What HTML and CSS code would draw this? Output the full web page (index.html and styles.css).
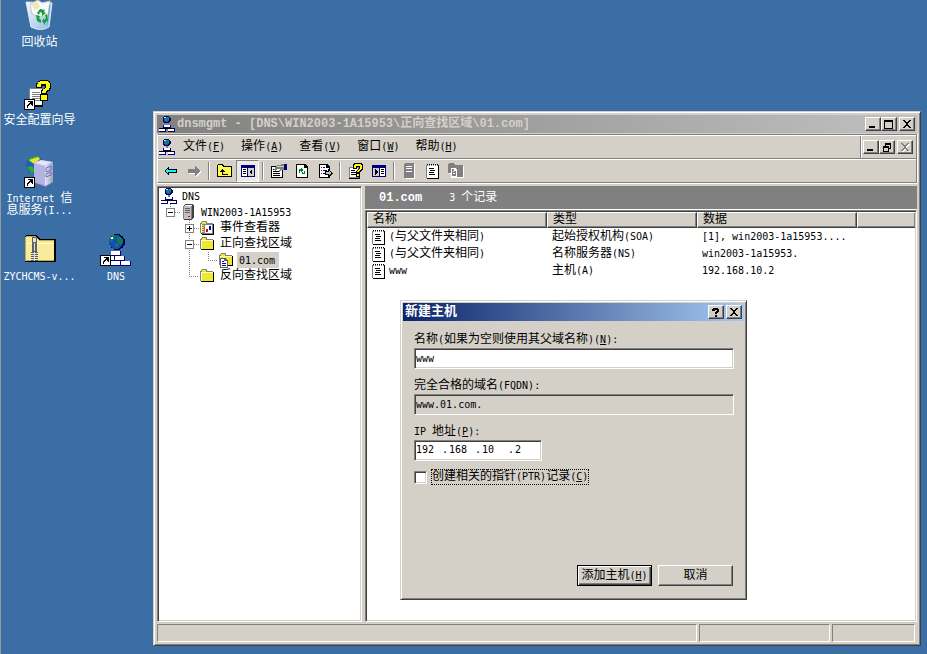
FILE: index.html
```html
<!DOCTYPE html>
<html lang="zh-CN">
<head>
    <meta charset="UTF-8">
    <meta name="viewport" content="width=device-width, initial-scale=1.0">
    <title>dnsmgmt</title>
    <link rel="stylesheet" href="styles.css">
</head>
<body>
    <!-- icon sprite -->
    <svg class="sprite" aria-hidden="true">
        <defs>
            <linearGradient id="glass" x1="0" y1="0" x2="1" y2="1">
                <stop offset="0" stop-color="#f4fafd"/>
                <stop offset="1" stop-color="#8ebbe2"/>
            </linearGradient>
            <linearGradient id="tower" x1="0" y1="0" x2="1" y2="0">
                <stop offset="0" stop-color="#e4e4fa"/>
                <stop offset="1" stop-color="#9c9cd0"/>
            </linearGradient>
        </defs>
        <symbol id="dns" viewBox="0 0 16 16">
            <path d="M5 0h5v1h1v1h1v3h-1v1h-1v1H5V6H4V1h1z" fill="#000060"/>
            <path d="M5 1h4v1h1v3H9v1H6V5H5z" fill="#2050d0"/>
            <path d="M6 3h2v2H6zM8 1h2v3H9V3H8z" fill="#00a040"/>
            <path d="M5 1h2v1H5z" fill="#c0ffff"/>
            <path d="M7 7h2v2H7z" fill="#808080"/>
            <path d="M4 9h8v3H4zM0 12h7v4H0zM9 12h7v4H9z" fill="#000080"/>
            <path d="M1 12h14v1H1z" fill="#000"/>
            <path d="M5 9h6v2H5zM0 13h6v2H0zM9 13h6v2H9z" fill="#fff"/>
        </symbol>
        <symbol id="server" viewBox="0 0 16 16">
            <path d="M5 0h7l2 1v13l-3 2H4V1z" fill="#404040"/>
            <path d="M4 2h7v13H4z" fill="#c0c0c0"/>
            <path d="M5 1h7v1H5z" fill="#fff"/>
            <path d="M11 2h1v13h-1z" fill="#808080"/>
            <path d="M5 4h5v1H5zM5 6h5v1H5zM5 8h5v1H5z" fill="#606060"/>
            <path d="M8 12h2v1H8z" fill="#e00000"/>
            <path d="M3 2h1v13H3z" fill="#808080"/>
        </symbol>
        <symbol id="folder" viewBox="0 0 16 16">
            <path d="M3 1h4l1 1v1h6v10H1V3h1V2h1z" fill="#808080"/>
            <path d="M2 4h12v9H2zM3 2h4v2H3z" fill="#f0e830"/>
            <path d="M2 4h12v1H2zM2 5h1v8H2z" fill="#ffffc0"/>
            <path d="M14 4h1v10H2v-1h12z" fill="#000"/>
        </symbol>
        <symbol id="events" viewBox="0 0 16 16">
            <use href="#folder"/>
            <path d="M3 4h12v11H3z" fill="#000"/>
            <path d="M3 4h11v10H3z" fill="#808080"/>
            <path d="M6 5h7v8H6z" fill="#fff"/>
            <path d="M3 5h2v1H3zM3 7h2v1H3zM3 9h2v1H3zM3 11h2v1H3z" fill="#ffe800"/>
            <path d="M7 9h2v3H7z" fill="#e00000"/>
            <path d="M10 6h2v4h-2z" fill="#0000c0"/>
        </symbol>
        <symbol id="zone" viewBox="0 0 16 16">
            <use href="#folder"/>
            <path d="M2 6h5l3 3v7H2z" fill="#606060"/>
            <path d="M3 7h3v2h3v6H3z" fill="#fff"/>
            <path d="M4 9h2v1H4zM4 11h4v1H4zM4 13h4v1H4z" fill="#0000c0"/>
        </symbol>
        <symbol id="record" viewBox="0 0 14 16">
            <path d="M1 1h1v1H1zM3 1h1v1H3zM5 1h1v1H5zM7 1h1v1H7zM9 1h1v1H9zM11 1h1v1h-1z" fill="#000"/>
            <path d="M0 2h12v13H0z" fill="#808080"/>
            <path d="M12 2h1v14H1v-1h11z" fill="#000"/>
            <path d="M1 3h11v12H1z" fill="#fff"/>
            <path d="M2 2h1v1H2zM4 2h1v1H4zM6 2h1v1H6zM8 2h1v1H8zM10 2h1v1h-1z" fill="#fff"/>
            <path d="M3 5h5v1H3zM4 7h5v1H4zM3 9h5v1H3zM3 11h6v1H3z" fill="#000"/>
        </symbol>
        <!-- tree guides, one 19px cell each -->
        <symbol id="tee-minus" viewBox="0 0 19 16">
            <path d="M9.500 0v16M14 8.500h5" class="dots"/>
            <path d="M5.500 4.500h8v8h-8z" fill="#fff" stroke="#808080"/>
            <path d="M7 8.500h5" stroke="#000"/>
        </symbol>
        <symbol id="end-minus" viewBox="0 0 19 16">
            <path d="M9.500 0v4M14 8.500h5" class="dots"/>
            <path d="M5.500 4.500h8v8h-8z" fill="#fff" stroke="#808080"/>
            <path d="M7 8.500h5" stroke="#000"/>
        </symbol>
        <symbol id="tee-plus" viewBox="0 0 19 16">
            <path d="M9.500 0v16M14 8.500h5" class="dots"/>
            <path d="M5.500 4.500h8v8h-8z" fill="#fff" stroke="#808080"/>
            <path d="M7 8.500h5M9.500 6v5" stroke="#000"/>
        </symbol>
        <symbol id="line" viewBox="0 0 19 16"><path d="M9.500 0v16" class="dots"/></symbol>
        <symbol id="elbow" viewBox="0 0 19 16"><path d="M9.500 0v8.500H19" class="dots"/></symbol>
        <symbol id="close" viewBox="0 0 10 8">
            <path d="M1 0h2v1h1v1h2V1h1V0h2v1H8v1H7v1H6v2h1v1h1v1h1v1H7V7H6V6H4v1H3v1H1V7h1V6h1V5h1V3H3V2H2V1H1z"/>
        </symbol>
        <symbol id="shortcut" viewBox="0 0 11 11">
            <path d="M0 0h11v11H0z" fill="#000"/>
            <path d="M1 1h9v9H1z" fill="#fff"/>
            <path d="M4 2h5v5H8V6H7V5H6v1H5v1H4v2H3V6h1V5h1V4h1V3H4z" fill="#000"/>
        </symbol>
        <symbol id="question" viewBox="0 0 15 22">
            <path d="M4 0h8v1h2v2h1v6h-1v2h-2v1h-1v2h1v7H4v-7h1v-4h1V9h2V8h1V6H6v2H0V3h2V1h2z" fill="#000"/>
            <path d="M4 1h8v1h1v1h1v5h-1v2h-2v1h-1v2H6v-2h1V9h2V8h1V4H5v3H1V4h1V2h2zM5 15h6v5H5z" fill="#ff0"/>
        </symbol>
    </svg>

    <main class="desktop">
        <section class="shortcuts">
            <a class="shortcut" href="#">
                <svg width="32" height="32" viewBox="0 0 32 32" class="smooth">
                    <path d="M2 2l26 1-3 24q-8 5-18 0z" fill="url(#glass)" stroke="#dcecf6"/>
                    <path d="M6 4l8-4 4 3 8-2-2 14-9 2-7-3z" fill="#fafafa" stroke="#c8c8c8"/>
                    <path d="M7 4l6-3 3 6-5 3z" fill="#f3e6b4"/>
                    <path d="M26 5l-3 20" stroke="#6ca0d0" fill="none"/>
                    <path d="M13 13l3-4 5 1-1 2 2 1-4 3v-3l-2-1-1 3zM12 15l4 1-1 2 2 2v3l-4-2zM23 14l1 6-3 3v2l-3-4 2-3v2l2-2-1-3z" fill="#14a03c"/>
                </svg>
                <span>回收站</span>
            </a>
            <a class="shortcut" href="#">
                <svg width="32" height="32" viewBox="0 0 32 32">
                    <path d="M6 11h13v18H6z" fill="#000"/>
                    <path d="M5 10h13v17H5z" fill="#fff"/>
                    <path d="M5 10h13v1H5zM5 10h1v17H5z" fill="#808080"/>
                    <path d="M8 14h8v1H8zM8 16h8v1H8zM8 18h8v1H8zM8 20h8v1H8zM8 22h8v1H8z" fill="#808080"/>
                    <use href="#question" x="12" y="2" width="15" height="22"/>
                    <use href="#shortcut" x="0" y="21" width="11" height="11"/>
                </svg>
                <span>安全配置向导</span>
            </a>
            <a class="shortcut" href="#">
                <svg width="32" height="32" viewBox="0 0 32 32" class="smooth">
                    <circle cx="11" cy="9" r="9" fill="#1c62b8"/>
                    <path d="M4 3l6-3 6 1-2 4-5 2-3-1zM3 11l5-1 3 4-3 4z" fill="#35a830"/>
                    <path d="M5 4l9-3 2 2-6 5z" fill="#f0e030"/>
                    <path d="M10 7l7-3 12 2v20l-7 5-12-4z" fill="#8080b8"/>
                    <path d="M10 7l11 3v20l-11-4z" fill="#b4b4e0"/>
                    <path d="M10 7l7-3 12 2-8 4z" fill="#e4e4fa"/>
                    <path d="M21 10l8-4v20l-8 4z" fill="url(#tower)"/>
                    <path d="M22 12l5-2v4l-5 2zM22 18l5-2v3l-5 2z" fill="none" stroke="#7070a8"/>
                    <path d="M26 23h2v2h-2z" fill="#70e030"/>
                    <use href="#shortcut" x="0" y="21" width="11" height="11"/>
                </svg>
                <span><span class="en">Internet </span>信<br>息服务<span class="en">(I...</span></span>
            </a>
            <a class="shortcut" href="#">
                <svg width="32" height="32" viewBox="0 0 32 32">
                    <path d="M2 1h11l3 4h15l1 1v22H1V3z" fill="#000"/>
                    <path d="M2 2h10l3 4h15v21H1V3z" fill="#c8a850"/>
                    <path d="M2 3h10l3 4h15v19H2z" fill="#f8eb9c"/>
                    <path d="M3 9h26v1H3z" fill="#fffce0"/>
                    <path d="M8 3h5v15H8z" fill="#606060"/>
                    <path d="M9 4h3v4H9zM10 9h1v8h-1z" fill="#e0e0e0"/>
                    <path d="M8 18h5v9H8z" fill="#e0e0e0"/>
                    <path d="M7 18h3v1H7zM11 20h3v1h-3zM7 22h3v1H7zM11 24h3v1h-3zM7 26h3v1H7zM7 20h3v1H7zM11 18h3v1h-3zM11 22h3v1h-3zM11 26h3v1h-3zM7 24h3v1H7z" fill="#606060"/>
                </svg>
                <span class="en">ZYCHCMS-v...</span>
            </a>
            <a class="shortcut last-row" href="#">
                <svg width="32" height="32" viewBox="0 0 32 32">
                    <circle cx="17" cy="8" r="8" fill="#000050"/>
                    <circle cx="16" cy="8" r="7" fill="#1848c0"/>
                    <path d="M10 4l3-3h3l-1 3-3 4-2-1zM17 3h4l2 3-1 4h-3l-2-3zM15 9l4 1-1 4-3-1z" fill="#108048"/>
                    <path d="M11 3h2v2h-2z" fill="#fff"/>
                    <path d="M11 17h10v5H11zM5 22h10v5H5zM15 22h10v5H15zM11 27h10v5H11zM21 27h10v5H21z" fill="#000080"/>
                    <path d="M11 17h9v4H11zM5 22h9v4H5zM15 22h9v4H15zM11 27h9v4H11zM21 27h9v4H21z" fill="#fff"/>
                    <use href="#shortcut" x="0" y="21" width="11" height="11"/>
                </svg>
                <span class="en">DNS</span>
            </a>
        </section>

        <section class="window">
            <header class="titlebar">
                <svg width="16" height="16"><use href="#dns"/></svg>
                <h1>dnsmgmt - [DNS\WIN2003-1A15953\正向查找区域\01.com]</h1>
                <button class="caption" aria-label="最小化"><svg width="10" height="8"><path d="M1 6h6v2H1z"/></svg></button>
                <button class="caption" aria-label="最大化"><svg width="10" height="9"><path d="M0 0h9v9H0zM1 2v6h7V2z" fill-rule="evenodd"/></svg></button>
                <button class="caption apart" aria-label="关闭"><svg width="10" height="8"><use href="#close"/></svg></button>
            </header>

            <div class="bars">
                <nav class="menubar">
                    <svg width="16" height="16"><use href="#dns"/></svg>
                    <button class="menu">文件<span class="en">(<u>F</u>)</span></button>
                    <button class="menu">操作<span class="en">(<u>A</u>)</span></button>
                    <button class="menu">查看<span class="en">(<u>V</u>)</span></button>
                    <button class="menu">窗口<span class="en">(<u>W</u>)</span></button>
                    <button class="menu">帮助<span class="en">(<u>H</u>)</span></button>
                    <div class="child-buttons">
                        <button class="caption" aria-label="最小化"><svg width="10" height="8"><path d="M1 6h6v2H1z"/></svg></button>
                        <button class="caption" aria-label="还原"><svg width="10" height="9"><path d="M3 0h6v6H7v3H1V3h2zM4 2v1h3v2h1V2zM2 5v3h4V5z" fill-rule="evenodd"/></svg></button>
                        <button class="caption apart" aria-label="关闭" disabled><svg width="10" height="8"><use href="#close"/></svg></button>
                    </div>
                </nav>
                <div class="toolbar">
                    <button class="tool" aria-label="后退"><svg width="16" height="16"><path d="M1 8l5-5v3h8v4H6v3z" fill="#000"/><path d="M2 8l3-3v2h8v2H5v2z" fill="#0ff"/></svg></button>
                    <button class="tool" aria-label="前进"><svg width="16" height="16"><path d="M15 9l-5-5v3H3v4h7v3z" fill="#fff"/><path d="M14 8L9 3v3H2v4h7v3z" fill="#808080"/></svg></button>
                    <i class="sep"></i>
                    <button class="tool" aria-label="向上"><svg width="16" height="16"><path d="M1 1h5l1 2h8v11H0V2z" fill="#000"/><path d="M1 2h4l1 2h8v9H1z" fill="#ffff50"/><path d="M5 6h1v1h1v1h1v1H6v2h5v1H5V9H3V8h1V7h1z" fill="#000"/></svg></button>
                    <button class="tool pressed" aria-label="显示树"><svg width="16" height="16"><path d="M1 2h14v12H1z" fill="#000080"/><path d="M2 5h5v8H2zM8 5h6v8H8z" fill="#fff"/><path d="M8 5h6v8H8z" fill="#d4d0c8"/><path d="M3 6h3v1H3zM3 8h3v1H3zM3 10h3v1H3zM12 6v6L9 9z" fill="#000"/></svg></button>
                    <i class="sep"></i>
                    <button class="tool" aria-label="属性"><svg width="18" height="16"><path d="M1 3h12v12H1z" fill="#000"/><path d="M2 4h10v10H2z" fill="#fff"/><path d="M3 8h6v1H3zM3 10h7v1H3zM3 12h7v1H3zM3 6h2v1H3z" fill="#000"/><path d="M7 2h3l1-1h4v6h-3L9 9 8 8l2-2H7l-2 2-1-1z" fill="#808080"/><path d="M7 3h7v1H7z" fill="#d4d0c8"/><path d="M14 1h3v6h-3z" fill="#000080"/></svg></button>
                    <button class="tool" aria-label="刷新"><svg width="16" height="16"><path d="M2 1h9l3 3v11H2z" fill="#000"/><path d="M3 2h7v3h3v9H3z" fill="#fff"/><path d="M5 6h2V5l2 2-2 2V8H6v2H5zM10 8h1v3H9v1l-2-2 2-2v2h1z" fill="#008020"/></svg></button>
                    <button class="tool" aria-label="导出列表"><svg width="16" height="16"><path d="M2 1h8l3 3v11H2z" fill="#000"/><path d="M3 2h6v3h3v9H3z" fill="#fff"/><path d="M4 4h1v1H4zM4 7h1v1H4zM4 10h1v1H4z" fill="#c00000"/><path d="M6 4h2v1H6zM6 7h4v1H6zM6 10h2v1H6z" fill="#000080"/><path d="M8 8h3V6l5 4-5 5v-3H8z" fill="#000"/><path d="M9 9h3V8l2 2-2 2v-1H9z" fill="#c0c0c0"/></svg></button>
                    <i class="sep"></i>
                    <button class="tool" aria-label="帮助"><svg width="16" height="16"><path d="M1 4h11v12H1z" fill="#000"/><path d="M1 4h10v11H1z" fill="#808080"/><path d="M2 5h8v9H2z" fill="#fff"/><path d="M3 7h4v1H3zM3 9h5v1H3zM3 11h5v1H3z" fill="#000"/><path d="M6 0h7l2 2v4l-3 3v5H8V8l3-3V4H9v2H5V2z" fill="#000"/><path d="M7 1h5l2 2v2l-3 3v1H9V8l3-3V3H8v2H6V2zM9 11h2v2H9z" fill="#ff0"/></svg></button>
                    <button class="tool" aria-label="显示操作窗格"><svg width="16" height="16"><path d="M1 2h14v12H1z" fill="#000080"/><path d="M2 5h6v8H2z" fill="#d4d0c8"/><path d="M9 5h5v8H9z" fill="#fff"/><path d="M10 6h3v1h-3zM10 8h3v1h-3zM10 10h3v1h-3zM4 6v6l3-3z" fill="#000"/></svg></button>
                    <i class="sep"></i>
                    <button class="tool" aria-label="新建服务器"><svg width="16" height="16"><path d="M3 1h9l1 1v14H4z" fill="#fff"/><path d="M2 1l1-1h8l1 1v14H2z" fill="#808080"/><path d="M4 3h6v1H4zM4 5h6v1H4zM4 8h6v1H4z" fill="#fff"/></svg></button>
                    <button class="tool" aria-label="新建记录"><svg width="14" height="16"><use href="#record"/></svg></button>
                    <button class="tool" aria-label="新建区域"><svg width="16" height="16"><path d="M2 1h5l1 2h8v12H3V11H1z" fill="#fff"/><path d="M1 0h5l1 2h8v12H3v-4H0V1z" fill="#808080"/><path d="M3 5h4l2 2v7H3z" fill="#fff"/><path d="M4 6h2v2h2v5H4z" fill="#808080"/><path d="M5 8h1v1H5zM5 10h2v1H5z" fill="#fff"/></svg></button>
                </div>
            </div>

            <div class="panes">
                <ul class="tree">
                    <li><svg width="16" height="16"><use href="#dns"/></svg><span class="en">DNS</span></li>
                    <li><svg class="guide"><use href="#end-minus"/></svg><svg width="16" height="16"><use href="#server"/></svg><span class="en">WIN2003-1A15953</span></li>
                    <li><i class="blank"></i><svg class="guide"><use href="#tee-plus"/></svg><svg width="16" height="16"><use href="#events"/></svg><span>事件查看器</span></li>
                    <li><i class="blank"></i><svg class="guide"><use href="#tee-minus"/></svg><svg width="16" height="16"><use href="#folder"/></svg><span>正向查找区域</span></li>
                    <li><i class="blank"></i><svg class="guide"><use href="#line"/></svg><svg class="guide"><use href="#elbow"/></svg><svg width="16" height="16"><use href="#zone"/></svg><span class="en selected">01.com</span></li>
                    <li><i class="blank"></i><svg class="guide"><use href="#elbow"/></svg><svg width="16" height="16"><use href="#folder"/></svg><span>反向查找区域</span></li>
                </ul>

                <div class="details">
                    <div class="summary"><strong>01.com</strong><span><span class="en">3 </span>个记录</span></div>
                    <div class="list">
                        <table>
                            <colgroup><col class="col-name"><col class="col-type"><col class="col-data"><col></colgroup>
                            <thead>
                                <tr><th>名称</th><th>类型</th><th>数据</th><th class="rest"></th></tr>
                            </thead>
                            <tbody>
                                <tr>
                                    <td><div class="cell"><svg width="14" height="16"><use href="#record"/></svg><span><span class="en">(</span>与父文件夹相同<span class="en">)</span></span></div></td>
                                    <td><div class="cell"><span>起始授权机构<span class="en">(SOA)</span></span></div></td>
                                    <td><div class="cell en">[1], win2003-1a15953....</div></td>
                                    <td></td>
                                </tr>
                                <tr>
                                    <td><div class="cell"><svg width="14" height="16"><use href="#record"/></svg><span><span class="en">(</span>与父文件夹相同<span class="en">)</span></span></div></td>
                                    <td><div class="cell"><span>名称服务器<span class="en">(NS)</span></span></div></td>
                                    <td><div class="cell en">win2003-1a15953.</div></td>
                                    <td></td>
                                </tr>
                                <tr>
                                    <td><div class="cell"><svg width="14" height="16"><use href="#record"/></svg><span class="en">www</span></div></td>
                                    <td><div class="cell"><span>主机<span class="en">(A)</span></span></div></td>
                                    <td><div class="cell en">192.168.10.2</div></td>
                                    <td></td>
                                </tr>
                            </tbody>
                        </table>
                    </div>
                </div>
            </div>

            <footer class="statusbar"><div></div><div></div><div></div></footer>
        </section>

        <form class="dialog">
            <header class="titlebar active">
                <h2>新建主机</h2>
                <button type="button" class="caption" aria-label="帮助"><svg width="10" height="9"><path d="M2 0h5v1h1v3H7v1H6v1H4V4h1V3h1V2H4v1H1V1h1zM4 7h2v2H4z"/></svg></button>
                <button type="button" class="caption apart" aria-label="关闭"><svg width="10" height="8"><use href="#close"/></svg></button>
            </header>
            <div class="dialog-body">
                <div class="field">
                    <label for="host">名称<span class="en">(</span>如果为空则使用其父域名称<span class="en">)(<u>N</u>):</span></label>
                    <input type="text" id="host" class="sunken" value="www">
                </div>
                <div class="field">
                    <label for="fqdn">完全合格的域名<span class="en">(FQDN):</span></label>
                    <input type="text" id="fqdn" class="sunken" value="www.01.com." readonly>
                </div>
                <div class="field">
                    <label for="ip1"><span class="en">IP </span>地址<span class="en">(<u>P</u>):</span></label>
                    <div class="ip sunken">
                        <input type="text" id="ip1" value="192">.<input type="text" aria-label="IP 2" value="168">.<input type="text" aria-label="IP 3" value="10">.<input type="text" aria-label="IP 4" value="2">
                    </div>
                </div>
                <div class="check">
                    <input type="checkbox" id="ptr">
                    <label for="ptr">创建相关的指针<span class="en">(PTR)</span>记录<span class="en">(<u>C</u>)</span></label>
                </div>
                <div class="actions">
                    <button type="button" class="push default">添加主机<span class="en">(<u>H</u>)</span></button>
                    <button type="button" class="push">取消</button>
                </div>
            </div>
        </form>
    </main>
</body>
</html>
```
FILE: styles.css
```css
* {
    box-sizing: border-box;
}

body {
    margin: 0;
    background: #3a6ea5;
    color: #000;
    font: 12px/16px "Liberation Mono", "Noto Sans CJK SC", monospace;
}

button, input {
    font: inherit;
    color: inherit;
    border-radius: 0;
    margin: 0;
    padding: 0;
}

svg {
    display: block;
    flex: none;
    shape-rendering: crispEdges;
}

.smooth {
    shape-rendering: auto;
}

.sprite {
    position: absolute;
    width: 0;
    height: 0;
}

/* latin text sits at half the width of a chinese character */
.en {
    font-family: "DejaVu Sans Mono", monospace;
    font-size: 10px;
    white-space: pre;
}

.desktop {
    position: relative;
    min-height: 100vh;
    overflow: hidden;
    border-left: 1px solid #9a9a9a;
}

/* desktop icons */
.shortcuts {
    display: grid;
    grid-template-columns: 77px 76px;
    grid-template-rows: repeat(4, 78px);
    grid-auto-flow: column;
}

.shortcut {
    display: flex;
    flex-direction: column;
    align-items: center;
    gap: 5px;
    color: #fff;
    line-height: 12px;
    text-align: center;
    text-decoration: none;
}

.last-row {
    grid-row: 4;
}

/* main window */
.window {
    position: absolute;
    top: 111px;
    right: 6px;
    bottom: 8px;
    left: 152px;
    display: flex;
    flex-direction: column;
}

.window, .dialog {
    background: #d4d0c8;
    border: 1px solid;
    border-color: #d4d0c8 #404040 #404040 #d4d0c8;
    box-shadow: inset 1px 1px #fff, inset -1px -1px #808080;
    padding: 3px;
}

.titlebar {
    display: flex;
    align-items: center;
    height: 18px;
    padding: 0 2px;
    background: linear-gradient(to right, #808080, #c0c0c0);
    color: #d4d0c8;
}

.titlebar.active {
    background: linear-gradient(to right, #0a246a, #a6caf0);
    color: #fff;
}

.titlebar h1, .titlebar h2 {
    flex: 1;
    margin: 0;
    font-size: 12px;
    line-height: 18px;
    white-space: nowrap;
}

.titlebar h1 {
    padding-left: 2px;
}

.titlebar h2 {
    font-size: 13px;
}

.caption {
    display: flex;
    align-items: center;
    justify-content: center;
    width: 16px;
    height: 14px;
    background: #d4d0c8;
    border: 1px solid;
    border-color: #fff #404040 #404040 #fff;
    box-shadow: inset -1px -1px #808080;
    color: #000;
}

.caption.apart {
    margin-left: 2px;
}

.caption:disabled svg {
    fill: #808080;
    filter: drop-shadow(1px 1px 0 #fff);
}

.bars {
    margin-top: 1px;
    border: 1px solid;
    border-color: #808080 #808080 #808080 #fff;
    box-shadow: 0 1px #fff, 1px 0 #fff;
}

.menubar {
    display: flex;
    align-items: center;
    height: 24px;
    padding-left: 1px;
    border-top: 1px solid #fff;
    border-bottom: 1px solid #808080;
}

.menu {
    padding: 0 8px;
    border: 0;
    background: none;
    line-height: 18px;
}

.child-buttons {
    display: flex;
    align-items: center;
    align-self: stretch;
    margin-left: auto;
    padding: 0 3px 0 2px;
    border-left: 1px solid #808080;
    box-shadow: inset 1px 0 #fff;
}

.toolbar {
    display: flex;
    align-items: center;
    height: 23px;
    padding-left: 1px;
    border-top: 1px solid #fff;
}

.tool {
    display: flex;
    align-items: center;
    justify-content: center;
    width: 23px;
    height: 22px;
    border: 0;
    background: none;
}

.tool.pressed {
    border: 1px solid;
    border-color: #808080 #fff #fff #808080;
    background: #ebe9e4;
}

.sep {
    width: 2px;
    height: 18px;
    margin: 0 3px;
    border-left: 1px solid #808080;
    border-right: 1px solid #fff;
}

/* tree and details */
.panes {
    flex: 1;
    display: flex;
    gap: 3px;
    min-height: 0;
    margin-top: 3px;
}

.tree, .list, .sunken {
    background: #fff;
    border: 1px solid;
    border-color: #808080 #fff #fff #808080;
    box-shadow: inset 1px 1px #404040, inset -1px -1px #d4d0c8;
}

.tree {
    width: 205px;
    margin: 0;
    padding: 1px 3px;
    list-style: none;
}

.tree li {
    display: flex;
    height: 16px;
    line-height: 17px;
    white-space: nowrap;
}

.tree li > span {
    margin-left: 3px;
    padding: 0 2px;
}

.tree .selected {
    padding-right: 4px;
    background: #d4d0c8;
}

.guide, .blank {
    width: 19px;
    height: 16px;
}

.dots {
    fill: none;
    stroke: #808080;
    stroke-dasharray: 1 1;
}

.details {
    flex: 1;
    display: flex;
    flex-direction: column;
    min-width: 0;
}

.summary {
    display: flex;
    align-items: center;
    gap: 27px;
    height: 24px;
    padding-left: 14px;
    background: #808080;
    border-bottom: 1px solid #fff;
    color: #fff;
}

.list {
    flex: 1;
    padding: 1px;
    overflow: hidden;
}

table {
    width: 100%;
    table-layout: fixed;
    border-collapse: separate;
    border-spacing: 0;
}

.col-name {
    width: 180px;
}

.col-type {
    width: 150px;
}

.col-data {
    width: 160px;
}

th {
    height: 16px;
    padding: 0 5px;
    background: #d4d0c8;
    border: 1px solid;
    border-color: #fff #404040 #404040 #fff;
    box-shadow: inset -1px -1px #808080;
    font-weight: normal;
    line-height: 14px;
    text-align: left;
}

th.rest {
    border-right: 0;
}

td {
    height: 17px;
    padding: 0 5px;
}

.cell {
    display: flex;
    align-items: center;
    gap: 3px;
    height: 17px;
    white-space: pre;
}

.statusbar {
    display: flex;
    gap: 2px;
    margin-top: 2px;
    padding-right: 2px;
}

.statusbar div {
    width: 131px;
    height: 18px;
    border: 1px solid;
    border-color: #808080 #fff #fff #808080;
}

.statusbar div:first-child {
    flex: 1;
}

.statusbar div:last-child {
    width: 83px;
}

/* new host dialog */
.dialog {
    position: absolute;
    top: 300px;
    left: 399px;
    display: flex;
    flex-direction: column;
    width: 347px;
    min-height: 300px;
    padding: 2px;
}

.dialog-body {
    flex: 1;
    display: flex;
    flex-direction: column;
    gap: 9px;
    padding: 11px 10px 11px 11px;
}

.field label {
    display: block;
    height: 16px;
}

.field > input {
    display: block;
    width: 100%;
    height: 21px;
    padding: 0 1px 1px;
    font-family: "DejaVu Sans Mono", monospace;
    font-size: 10px;
}

.field > input:read-only {
    background: #d4d0c8;
}

.ip {
    display: flex;
    width: 128px;
    height: 21px;
    font-family: "DejaVu Sans Mono", monospace;
    font-size: 10px;
    line-height: 18px;
}

.ip input {
    width: 27px;
    height: 18px;
    padding-left: 1px;
    border: 0;
    background: none;
}

.check {
    display: flex;
    align-items: center;
    gap: 4px;
    height: 14px;
}

.check input {
    appearance: none;
    width: 13px;
    height: 13px;
    background: #fff;
    border: 1px solid;
    border-color: #808080 #fff #fff #808080;
    box-shadow: inset 1px 1px #404040, inset -1px -1px #d4d0c8;
}

.check label {
    height: 16px;
    line-height: 14px;
    border: 1px dotted #000;
}

.actions {
    display: flex;
    justify-content: flex-end;
    gap: 6px;
    margin-top: auto;
    padding-right: 1px;
}

.push {
    width: 75px;
    height: 21px;
    background: #d4d0c8;
    border: 1px solid;
    border-color: #fff #404040 #404040 #fff;
    box-shadow: inset -1px -1px #808080;
    line-height: 18px;
    white-space: nowrap;
}

.push.default {
    border-color: #000;
    box-shadow: inset 1px 1px #fff, inset -1px -1px #404040, inset -2px -2px #808080;
}
```
